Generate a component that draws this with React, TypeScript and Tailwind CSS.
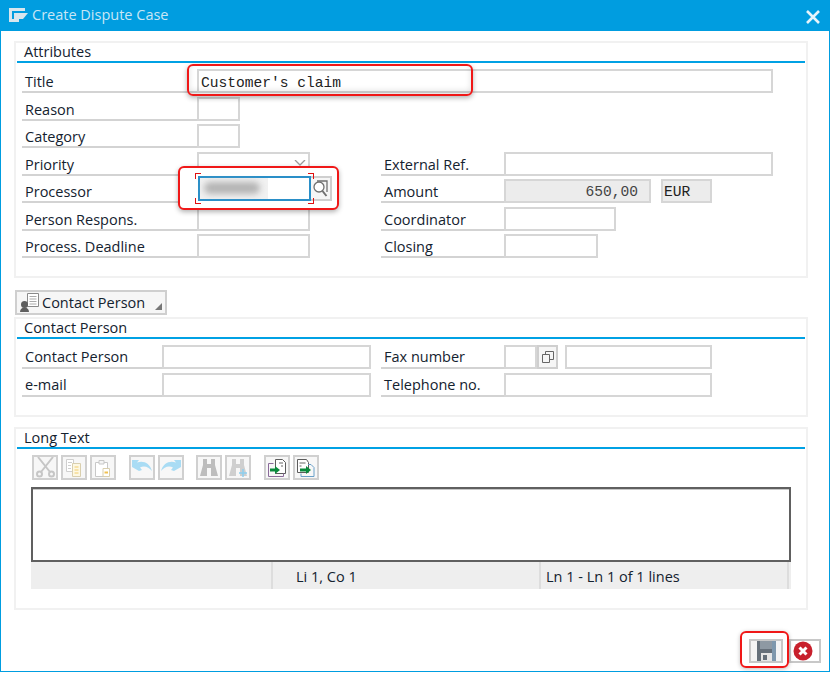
import React from "react";

const sans = "font-['Open_Sans',sans-serif]";
const mono = "font-['Liberation_Mono',monospace]";

const Label = ({ text, w, left = 0, tight }: { text: string; w: number; left?: number; tight?: boolean }) => (
  <div
    className={`h-[24px] shrink-0 border-b-2 border-[#d3d3d3] pl-[3px] text-[14.5px] text-[#14222f] ${tight ? "leading-[24px]" : "leading-[26px]"} ${sans}`}
    style={{ width: w, marginLeft: left }}
  >
    {text}
  </div>
);

const Field = ({ w, grey, children }: { w: number; grey?: boolean; children?: React.ReactNode }) => (
  <div
    className={`relative h-[24px] shrink-0 border-2 border-[#d6d6d6] ${grey ? "bg-[#ececec]" : "bg-white"}`}
    style={{ width: w }}
  >
    {children}
  </div>
);

const Panel = ({ title, h, children }: { title: string; h: number; children: React.ReactNode }) => (
  <div className="w-[794px] border-2 border-[#f1f1f1] bg-white px-[1px]" style={{ height: h }}>
    <div className={`h-[18px] pl-[7px] text-[14.5px] leading-[18px] text-[#14222f] ${sans}`}>{title}</div>
    <div className="h-[2px] bg-[#00a1e4]" />
    {children}
  </div>
);

const Row = ({ children }: { children: React.ReactNode }) => (
  <div className="mb-[3.5px] flex h-[24px] pl-[5px]">{children}</div>
);

const ToolBtn = ({ children, ml = 0 }: { children: React.ReactNode; ml?: number }) => (
  <div
    className="flex h-[25px] w-[26px] shrink-0 items-center justify-center border-2 border-[#d0d0d0] bg-[#f7f7f7]"
    style={{ marginLeft: ml }}
  >
    {children}
  </div>
);

const Scissors = () => (
  <svg width="21" height="21" viewBox="0 0 21 21" fill="none" stroke="#c6c6c6" strokeWidth="2">
    <path d="M3 0l12 15M18 0L6 15" />
    <circle cx="4.500" cy="17" r="2.500" />
    <circle cx="16.500" cy="17" r="2.500" />
  </svg>
);
const CopyIcon = () => (
  <svg width="20" height="20" viewBox="0 0 20 20" fill="none">
    <path d="M2.500 1.500h7v12h-7z" stroke="#cfcfcf" fill="#fff" />
    <path d="M8.500 5.500h8v13h-8z" stroke="#d9cfae" fill="#fdf8e4" />
    <path d="M10.500 9h4M10.500 12h4M10.500 15h4" stroke="#f2cc6a" />
    <path d="M4 4.500h4M4 7.500h3M4 10.500h3" stroke="#cfcfcf" />
  </svg>
);
const PasteIcon = () => (
  <svg width="20" height="20" viewBox="0 0 20 20" fill="none">
    <path d="M2.500 4.500h12v14h-12z" stroke="#c8c8c8" fill="#fff" />
    <path d="M6 2.500h5v3.500H6z" stroke="#c8c8c8" fill="#f4f4f4" />
    <path d="M10 10.500h6.500v8H10z" stroke="#d9cfae" fill="#fff" />
    <path d="M11.500 14.500h3.500" stroke="#f0c050" strokeWidth="2" />
  </svg>
);
const UndoIcon = ({ flip }: { flip?: boolean }) => (
  <svg width="22" height="18" viewBox="0 0 22 18" className={flip ? "-scale-x-100" : ""}>
    <path d="M1 8V1h7L6 3.500C12 1 19 4 21 12c-3-4-8-6-12-3.500L11 11l-3 1z" fill="#a9dcf4" />
  </svg>
);
const Binoculars = ({ plus }: { plus?: boolean }) => (
  <svg width="20" height="20" viewBox="0 0 20 20">
    <path d="M4 1h4v5h4V1h4v6l3 11h-7v-8H8v8H1l3-11z" fill={plus ? "#cfcfcf" : "#bdbdbd"} />
    {plus && <path d="M15 11v8M11 15h8" stroke="#8fd0ef" strokeWidth="1.500" />}
  </svg>
);
const ImportIcon = () => (
  <svg width="20" height="20" viewBox="0 0 20 20" fill="none">
    <path d="M8.500 1.500h7l3 3v11h-10z" stroke="#5c5c5c" fill="#fff" />
    <path d="M1.500 5.500h5M1.500 5.500v13h15v-3" stroke="#8a6a9a" />
    <path d="M3 10.500h5V8l5 4-5 4v-2.500H3z" fill="#0a8a3c" />
    <path d="M12 5h4M14 8h2" stroke="#666" />
  </svg>
);
const ExportIcon = () => (
  <svg width="20" height="20" viewBox="0 0 20 20" fill="none">
    <path d="M1.500 1.500h9l2 3v10h-11z" stroke="#5c5c5c" fill="#fff" />
    <path d="M3.500 5h6M3.500 8h2" stroke="#666" />
    <path d="M12 6.500h3l3 3v9H5v-3" stroke="#6aa0c8" />
    <path d="M4 10.500h6V8l5 4-5 4v-2.500H4z" fill="#0a8a3c" />
  </svg>
);

export default function App() {
  return (
    <div className="relative h-[672px] w-[830px] border-x border-b border-[#009de0] bg-white">
      {/* title bar */}
      <div className="-mx-px flex h-[31px] items-center bg-[#009de0] pl-[9px] pr-[10px]">
        <svg width="19" height="15" viewBox="0 0 19 15" fill="none">
          <path d="M0 0h16v3H3v8h7v3H0z" fill="#d7e6ee" />
          <path d="M5 5h14l-5 6H5z" fill="#d7e6ee" />
        </svg>
        <span className={`ml-[4px] -translate-y-[1px] text-[14.5px] text-[#c9e6f5] ${sans}`}>Create Dispute Case</span>
        <svg className="ml-auto mt-[2px]" width="14" height="14" viewBox="0 0 14 14" stroke="#e6f4fb" strokeWidth="2.600">
          <path d="M1 1l12 12M13 1L1 13" />
        </svg>
      </div>

      <div className="flex flex-col pl-[13px] pt-[10px]">
        <Panel title="Attributes" h={237}>
          <div className="pt-[6px]">
            <Row>
              <Label text="Title" w={175} />
              <Field w={576}>
                <span className={`absolute left-[2px] top-[3px] text-[14.600px] leading-[18px] text-[#222] ${mono}`}>
                  Customer's claim
                </span>
              </Field>
            </Row>
            <Row>
              <Label text="Reason" w={175} />
              <Field w={43} />
            </Row>
            <Row>
              <Label text="Category" w={175} />
              <Field w={43} />
            </Row>
            <Row>
              <Label text="Priority" w={175} />
              <Field w={113} />
              <Label text="External Ref." w={123} left={71} />
              <Field w={269} />
            </Row>
            <Row>
              <Label text="Processor" w={175} />
              <Field w={113} />
              <Label text="Amount" w={123} left={71} />
              <Field w={147} grey>
                <span className={`absolute right-[11px] top-[2px] text-[14.600px] leading-[18px] text-[#444] ${mono}`}>
                  650,00
                </span>
              </Field>
              <div className="w-[10px] shrink-0" />
              <Field w={51} grey>
                <span className={`absolute left-[1px] top-[2px] text-[14.600px] leading-[18px] text-[#222] ${mono}`}>
                  EUR
                </span>
              </Field>
            </Row>
            <Row>
              <Label text="Person Respons." w={175} />
              <Field w={113} />
              <Label text="Coordinator" w={123} left={71} />
              <Field w={112} />
            </Row>
            <Row>
              <Label text="Process. Deadline" w={175} />
              <Field w={113} />
              <Label text="Closing" w={123} left={71} />
              <Field w={94} />
            </Row>
          </div>
        </Panel>

        {/* contact person toggle */}
        <div className={`ml-[1px] mt-[12px] flex h-[25px] w-[152px] items-center border-2 border-[#cfcfcf] bg-[#f6f6f6] pl-[2px] text-[14.5px] text-[#14222f] ${sans}`}>
          <svg width="21" height="21" viewBox="0 0 21 21" fill="none">
            <path d="M8.500 1.500h11v13h-11z" stroke="#8a8a8a" fill="#fff" />
            <path d="M10.500 4.500h7M10.500 7h7M10.500 9.500h7M10.500 12h7" stroke="#aaa" />
            <circle cx="5.500" cy="12.500" r="3.500" fill="#5f5f5f" />
            <path d="M1 20c0-3 2-4.500 4.500-4.500S10 17 10 20z" fill="#5f5f5f" />
          </svg>
          <span className="ml-[2px]">Contact Person</span>
          <div className="ml-auto mr-[3px] mt-[8px] h-0 w-0 border-b-[7px] border-l-[7px] border-b-[#777] border-l-transparent" />
        </div>

        <div className="mt-[2px]">
          <Panel title="Contact Person" h={100}>
            <div className="pt-[6px]">
              <Row>
                <Label text="Contact Person" w={140} tight />
                <Field w={209} />
                <Label text="Fax number" w={123} left={10} tight />
                <Field w={33} />
                <div className="flex h-[24px] w-[21px] shrink-0 items-center justify-center border-2 border-[#cfcfcf] bg-[#f6f6f6]">
                  <svg width="14" height="14" viewBox="0 0 14 14" fill="none" stroke="#666">
                    <path d="M1.500 4.500h7v8h-7zM4.500 4V1.500h8v8H9" />
                  </svg>
                </div>
                <div className="w-[7px] shrink-0" />
                <Field w={147} />
              </Row>
              <Row>
                <Label text="e-mail" w={140} tight />
                <Field w={209} />
                <Label text="Telephone no." w={123} left={10} tight />
                <Field w={208} />
              </Row>
            </div>
          </Panel>
        </div>

        <div className="mt-[10px]">
          <Panel title="Long Text" h={183}>
            <div className="flex pl-[15px] pt-[6px]">
              <ToolBtn><Scissors /></ToolBtn>
              <ToolBtn ml={3}><CopyIcon /></ToolBtn>
              <ToolBtn ml={3}><PasteIcon /></ToolBtn>
              <ToolBtn ml={13}><UndoIcon /></ToolBtn>
              <ToolBtn ml={3}><UndoIcon flip /></ToolBtn>
              <ToolBtn ml={12}><Binoculars /></ToolBtn>
              <ToolBtn ml={3}><Binoculars plus /></ToolBtn>
              <ToolBtn ml={13}><ImportIcon /></ToolBtn>
              <ToolBtn ml={3}><ExportIcon /></ToolBtn>
            </div>
            <div className="ml-[14px] mt-[7px] h-[75px] w-[760px] border-2 border-[#606060] bg-white">
              <div className="h-[1px] bg-[#c8c8c8]" />
            </div>
            <div className={`ml-[14px] flex h-[27px] w-[760px] bg-[#eeeeee] text-[14.5px] leading-[29px] text-[#14222f] ${sans}`}>
              <div className="w-[242px] border-r-2 border-[#dddddd]" />
              <div className="w-[268px] border-r-2 border-[#dddddd] pl-[23px]">Li 1, Co 1</div>
              <div className="w-[248px] border-r-2 border-[#dddddd] pl-[5px]">Ln 1 - Ln 1 of 1 lines</div>
            </div>
          </Panel>
        </div>

        {/* footer buttons */}
        <div className="mt-[29px] flex justify-end pr-[8px]">
          <div className="flex h-[24px] w-[34px] items-center justify-center border-2 border-[#c8c8c8] bg-[#f4f4f4]">
            <svg width="19" height="20" viewBox="0 0 19 20">
              <path d="M0 0h19v20H0z" fill="#66707a" />
              <path d="M3 0h12v8H3z" fill="#8e99a3" />
              <path d="M15 0h4v20h-4z" fill="#7f98ad" />
              <path d="M4 12h11v8H4z" fill="#e6e6e6" />
              <path d="M6 14h4v5H6z" fill="#66707a" />
            </svg>
          </div>
          <div className="ml-[6px] flex h-[24px] w-[32px] items-center border-2 border-[#c8c8c8] bg-white pl-[2px]">
            <svg width="20" height="20" viewBox="0 0 20 20">
              <circle cx="10" cy="10" r="9.500" fill="#c8202c" />
              <path d="M6.500 6.500l7 7M13.500 6.500l-7 7" stroke="#fff" strokeWidth="3" />
            </svg>
          </div>
        </div>
      </div>

      {/* red callouts drawn over the form */}
      <div className="absolute left-[186px] top-[64px] h-[32px] w-[286px] rounded-[6px] border-2 border-[#f01818] shadow-[0_2px_5px_rgba(0,0,0,0.3),inset_0_-3px_6px_rgba(0,0,0,0.12)]" />
      <div className="absolute left-[177px] top-[166px] flex h-[44px] w-[161px] items-center rounded-[6px] border-2 border-[#f01818] bg-white pl-[17.5px] shadow-[0_2px_5px_rgba(0,0,0,0.3)]">
        <div className="relative h-[25px] w-[113px] border-2 border-[#2a8fc8] bg-white">
          <div className="h-full w-[68px] bg-[#f1f1f1]">
            <div className="ml-[4px] h-[12px] w-[56px] translate-y-[4px] rounded-full bg-[#b4b4b4] blur-[3px]" />
          </div>
          <div className="absolute left-[-5px] top-[-5px] h-[6px] w-[6px] border-l border-t border-[#e01010]" />
          <div className="absolute right-[-5px] top-[-5px] h-[6px] w-[6px] border-r border-t border-[#e01010]" />
          <div className="absolute bottom-[-5px] left-[-5px] h-[6px] w-[6px] border-b border-l border-[#e01010]" />
          <div className="absolute bottom-[-5px] right-[-5px] h-[6px] w-[6px] border-b border-r border-[#e01010]" />
        </div>
        <div className="flex h-[25px] w-[21px] items-center justify-center border-y-2 border-r-2 border-[#cfcfcf] bg-[#f6f6f6]">
          <svg width="17" height="18" viewBox="0 0 17 18" fill="none" stroke="#707070" strokeWidth="1.300">
            <path d="M5 2h10v11" />
            <circle cx="7" cy="8" r="5" fill="#fff" />
            <path d="M10.500 12l4 5" strokeWidth="2" />
          </svg>
        </div>
      </div>
      <div className="absolute left-[293px] top-[160px] z-10 h-[6px] w-[12px]">
        <svg width="12" height="6" viewBox="0 0 12 6" fill="none" stroke="#9a9a9a" strokeWidth="1.300">
          <path d="M1 0l5 5 5-5" />
        </svg>
      </div>
      <div className="absolute left-[739px] top-[631px] h-[37px] w-[49px] rounded-[6px] border-2 border-[#f01818] shadow-[0_1px_4px_rgba(0,0,0,0.25)]" />
    </div>
  );
}
